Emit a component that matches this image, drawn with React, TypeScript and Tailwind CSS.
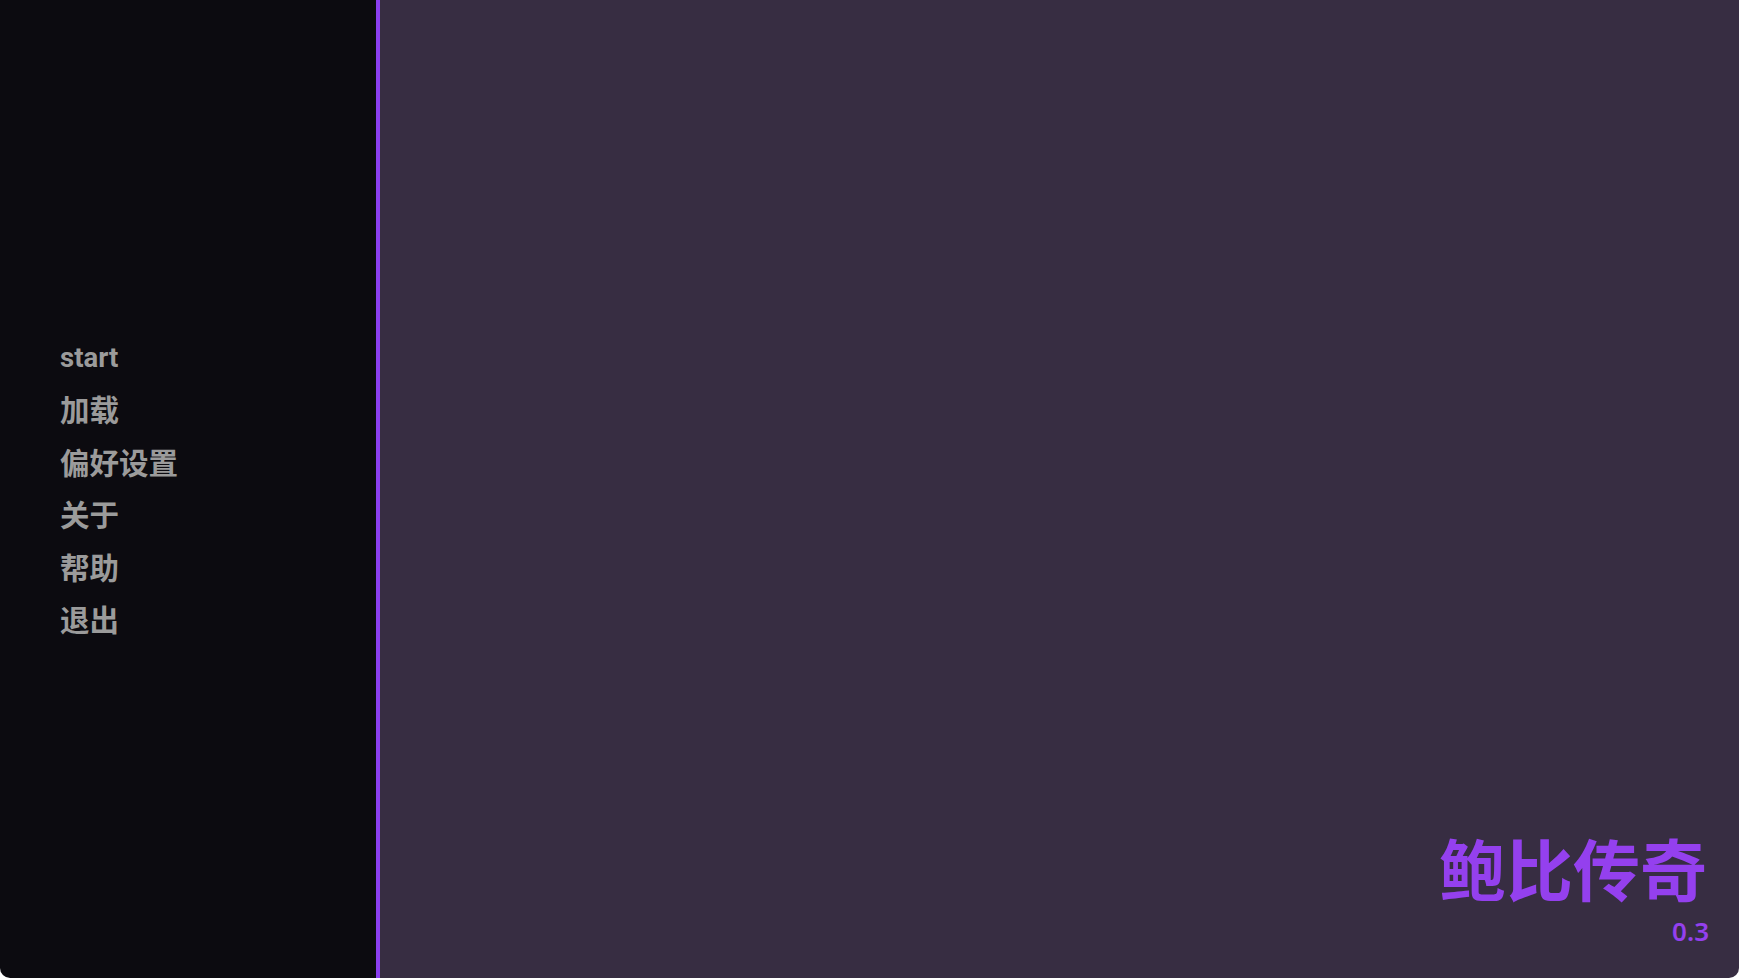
import React from "react";

const items = ["start", "加载", "偏好设置", "关于", "帮助", "退出"];

export default function App() {
  return (
    <div className="h-[978px] w-full bg-white">
      <div
        className="flex h-[978px] w-full overflow-hidden rounded-b-[10px]"
        style={{ fontFamily: '"Noto Sans", "Noto Sans CJK SC", sans-serif' }}
      >
        <aside className="flex w-[380px] shrink-0 flex-col justify-center border-r-4 border-[#8b3ff0] bg-[#0c0b10] pl-[60px]">
          <nav className="flex flex-col">
            {items.map((t) =>
              t === "start" ? (
                <div
                  key={t}
                  className="h-[52.5px] font-['Roboto',sans-serif] text-[27.5px] font-bold leading-[51px] text-[#9b9b9b]"
                >
                  {t}
                </div>
              ) : (
                <div
                  key={t}
                  className="h-[52.5px] text-[29.5px] font-semibold leading-[52.5px] text-[#9b9b9b]"
                >
                  {t}
                </div>
              )
            )}
          </nav>
        </aside>
        <main className="flex flex-1 flex-col items-end justify-end bg-[#372d42] pb-[29px] pr-[30px]">
          <div className="mr-[2px] text-[67px] font-bold leading-[80px] text-[#9440ee]">
            鲍比传奇
          </div>
          <div className="mt-[3px] text-[26px] font-semibold leading-[36px] text-[#9440ee]">
            0.3
          </div>
        </main>
      </div>
    </div>
  );
}
